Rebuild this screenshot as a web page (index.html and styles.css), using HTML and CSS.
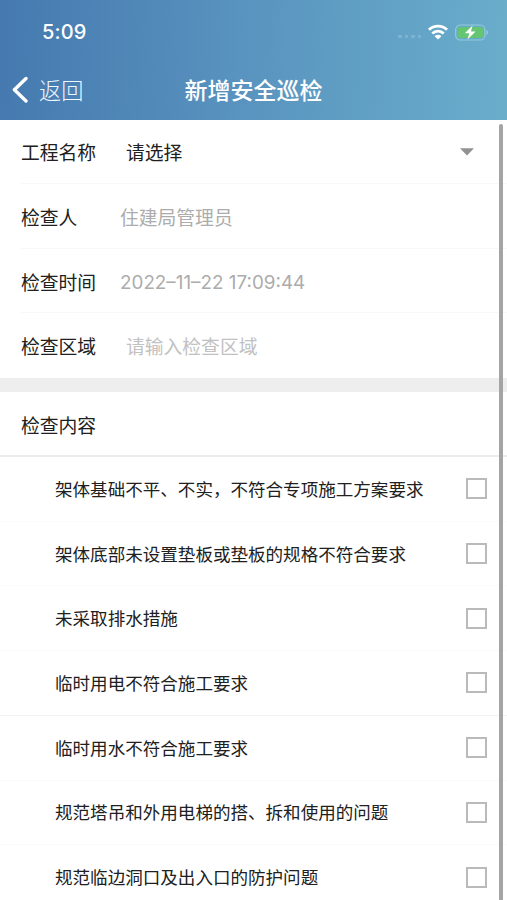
FILE: index.html
```html
<!DOCTYPE html>
<html lang="zh-CN">
<head>
<meta charset="utf-8">
<meta name="viewport" content="width=device-width, initial-scale=1">
<title>新增安全巡检</title>
<link rel="stylesheet" href="styles.css">
</head>
<body>
<div class="app">
  <header class="header">
    <div class="status">
      <span class="time">5:09</span>
      <div class="indicators">
        <span class="signal"><i></i><i></i><i></i><i></i></span>
        <svg class="wifi" width="20" height="16" viewBox="0 0 20 16">
          <g fill="none" stroke="#fff" stroke-width="2.8">
            <path d="M1 5.8a12.700 12.700 0 0 1 18 0"/>
            <path d="M4.300 9.400a8.100 8.100 0 0 1 11.400 0"/>
          </g>
          <path fill="#fff" d="M6.600 12.200a4.800 4.800 0 0 1 6.800 0L10 15.600z"/>
        </svg>
        <svg class="battery" width="34" height="17" viewBox="0 0 34 17">
          <rect x=".7" y="1" width="29.200" height="15" rx="4.600" fill="none" stroke="#93cbd9" stroke-width="1.200"/>
          <rect x="2.600" y="2.900" width="25.400" height="11.200" rx="2.800" fill="#65c573"/>
          <path d="M31.400 6v5c1-.4 1.700-1.400 1.700-2.500S32.400 6.400 31.400 6z" fill="#93cbd9"/>
          <path d="M17.600 1.500 9.800 9.200h4.600l-2 6.200 8.200-7.900h-4.700z" fill="#fff"/>
        </svg>
      </div>
    </div>
    <nav class="nav">
      <a class="back">
        <svg width="16" height="27" viewBox="0 0 16 27"><path d="M14 2.500 2.400 13.800 14 25" fill="none" stroke="#fff" stroke-width="3.400" stroke-linecap="round" stroke-linejoin="round"/></svg>
        <span>返回</span>
      </a>
      <h1 class="title">新增安全巡检</h1>
    </nav>
  </header>
  <main class="content">
    <section class="form">
      <div class="row"><span class="label">工程名称</span><span class="value select">请选择</span><svg class="caret" width="14" height="8" viewBox="0 0 14 8"><path d="M0 .3h14L7 7.500z" fill="#929292"/></svg></div>
      <div class="row"><span class="label">检查人</span><span class="value readonly">住建局管理员</span></div>
      <div class="row"><span class="label">检查时间</span><span class="value readonly date">2022–11–22 17:09:44</span></div>
      <div class="row"><span class="label">检查区域</span><span class="value hint">请输入检查区域</span></div>
    </section>
    <h2 class="section-title">检查内容</h2>
    <ul class="list">
      <li class="item"><span>架体基础不平、不实，不符合专项施工方案要求</span><i class="check"></i></li>
      <li class="item"><span>架体底部未设置垫板或垫板的规格不符合要求</span><i class="check"></i></li>
      <li class="item"><span>未采取排水措施</span><i class="check"></i></li>
      <li class="item strong"><span>临时用电不符合施工要求</span><i class="check"></i></li>
      <li class="item"><span>临时用水不符合施工要求</span><i class="check"></i></li>
      <li class="item"><span>规范塔吊和外用电梯的搭、拆和使用的问题</span><i class="check"></i></li>
      <li class="item"><span>规范临边洞口及出入口的防护问题</span><i class="check"></i></li>
    </ul>
    <div class="scrollbar"></div>
  </main>
</div>
</body>
</html>
```
FILE: styles.css
```css
* { box-sizing: border-box; }
body {
  margin: 0;
  background: #fff;
  color: #202020;
  font-family: "Noto Sans CJK SC", sans-serif;
}
.app {
  height: 900px;
  overflow: hidden;
  display: flex;
  flex-direction: column;
}
.header {
  flex: none;
  height: 119.500px;
  background: linear-gradient(92deg, #4579b0 0%, #4f87b7 25%, #5993bf 48%, #609fc4 70%, #69adcb 100%);
  color: #fff;
}
.status {
  height: 60px;
  padding: 4px 18px 0 42px;
  display: flex;
  align-items: center;
  justify-content: space-between;
}
.time {
  font: 500 20px/24px Inter, sans-serif;
  letter-spacing: .1px;
}
.indicators { display: flex; align-items: center; }
.signal { display: flex; gap: 3px; margin: 9px 7px 0 0; }
.signal i { width: 3.400px; height: 3.400px; border-radius: 1px; background: #7eb4d3; }
.wifi { margin-right: 7px; }
.nav {
  height: 59px;
  display: grid;
  grid-template-columns: 1fr auto 1fr;
  align-items: center;
}
.back {
  display: flex;
  align-items: center;
  gap: 11px;
  padding-left: 12px;
  font-size: 22.200px;
  font-weight: 300;
  line-height: 32px;
  color: #f0f7fc;
}
.back span, .title { padding-bottom: 2px; }
.title {
  margin: 0;
  font-size: 23px;
  line-height: 32px;
  font-weight: 500;
}
.content { position: relative; flex: 1; min-height: 0; }
.form { border-bottom: 14px solid #eee; }
.row {
  height: 64.650px;
  margin-left: 21px;
  padding: 2px 33px 0 0;
  display: flex;
  align-items: center;
  border-bottom: 1px solid #f8f8f8;
  font-size: 18.800px;
  line-height: 28px;
}
.row:last-child { border-bottom-color: transparent; }
.label { width: 99px; }
.value { flex: 1; }
.select, .hint { padding-left: 6px; }
.readonly { color: #acacac; }
.date { padding-top: 2px; font-family: Inter, sans-serif; font-size: 18.850px; }
.hint { color: #c1c1c1; }
.section-title {
  height: 65px;
  margin: 0;
  padding-left: 21px;
  border-bottom: 2px solid #ececec;
  font-size: 18.800px;
  font-weight: 400;
  line-height: 65px;
}
.list { margin: 0; padding: 0; list-style: none; }
.item {
  height: 64.700px;
  padding: 0 19.600px 0 55px;
  display: flex;
  align-items: center;
  justify-content: space-between;
  border-bottom: 1px solid #fafafa;
  font-size: 17.560px;
  line-height: 26px;
}
.strong { border-bottom-color: #f3f3f3; }
.check { width: 21px; height: 21px; border: 2px solid #bababa; }
.scrollbar {
  position: absolute;
  top: 4px;
  right: 4px;
  bottom: -6px;
  width: 4px;
  border-radius: 2px;
  background: #a4a4a4;
}
```
